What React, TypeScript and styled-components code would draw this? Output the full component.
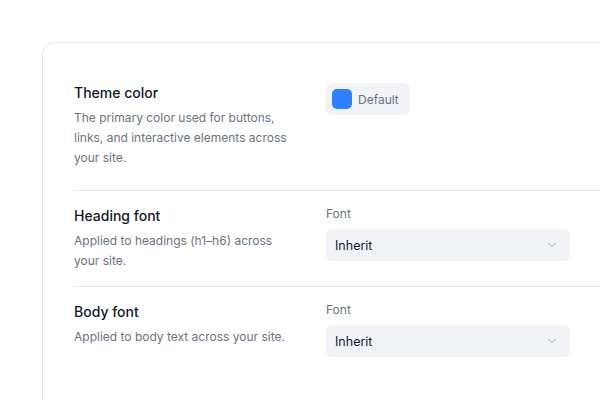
import React from 'react';
import styled, { createGlobalStyle } from 'styled-components';
import { ChevronDown } from 'lucide-react';

const GlobalStyle = createGlobalStyle`
  html, body {
    margin: 0;
    padding: 0;
    background: #ffffff;
    overflow: hidden;
  }
  body {
    font-family: Inter, "Noto Sans", sans-serif;
    -webkit-font-smoothing: antialiased;
  }
`;

type SettingRowProps = {
  title: string;
  description: string;
  first?: boolean;
  children: React.ReactNode;
};

function SettingRow({ title, description, first, children }: SettingRowProps) {
  return (
    <StyledRow $first={first}>
      <StyledInfo>
        <StyledTitle>{title}</StyledTitle>
        <StyledDescription>{description}</StyledDescription>
      </StyledInfo>
      <StyledControl>{children}</StyledControl>
    </StyledRow>
  );
}

function FontSelect({ value }: { value: string }) {
  return (
    <>
      <StyledLabel>Font</StyledLabel>
      <StyledSelect type="button">
        <span>{value}</span>
        <ChevronDown size={14} strokeWidth={1.5} color="#9ca3af" />
      </StyledSelect>
    </>
  );
}

export default function App() {
  return (
    <StyledPage>
      <GlobalStyle />
      <StyledCard>
        <SettingRow
          first
          title="Theme color"
          description="The primary color used for buttons, links, and interactive elements across your site."
        >
          <StyledColorButton type="button">
            <StyledSwatch $color="#2f80fa" />
            Default
          </StyledColorButton>
        </SettingRow>
        <SettingRow
          title="Heading font"
          description="Applied to headings (h1–h6) across your site."
        >
          <FontSelect value="Inherit" />
        </SettingRow>
        <SettingRow
          title="Body font"
          description="Applied to body text across your site."
        >
          <FontSelect value="Inherit" />
        </SettingRow>
      </StyledCard>
    </StyledPage>
  );
}

const StyledPage = styled.div`
  width: 600px;
  height: 400px;
  padding: 42px 0 0 42px;
  box-sizing: border-box;
  overflow: hidden;
`;

const StyledCard = styled.div`
  width: 640px;
  min-height: 420px;
  box-sizing: border-box;
  background: #ffffff;
  border: 1px solid #e5e7eb;
  border-radius: 12px;
  padding: 24px 31px;
  display: flex;
  flex-direction: column;
`;

const StyledRow = styled.div<{ $first?: boolean }>`
  display: grid;
  grid-template-columns: 220px 244px;
  column-gap: 32px;
  padding: ${({ $first }) => ($first ? '16px 0 22px' : '15px 0 15px')};
  border-top: ${({ $first }) => ($first ? 'none' : '1px solid #e5e7eb')};
`;

const StyledInfo = styled.div`
  display: flex;
  flex-direction: column;
  gap: 5px;
`;

const StyledTitle = styled.div`
  font-size: 14px;
  line-height: 20px;
  font-weight: 500;
  color: #111827;
`;

const StyledDescription = styled.div`
  font-size: 12px;
  line-height: 20px;
  color: #6b7280;
`;

const StyledControl = styled.div`
  display: flex;
  flex-direction: column;
  align-items: flex-start;
  gap: 7px;
`;

const StyledColorButton = styled.button`
  display: flex;
  align-items: center;
  gap: 6px;
  height: 32px;
  padding: 0 11px 0 6px;
  border: none;
  border-radius: 6px;
  background: #f2f3f6;
  font-family: inherit;
  font-size: 12px;
  color: #6b7280;
  cursor: pointer;
`;

const StyledSwatch = styled.span<{ $color: string }>`
  width: 20px;
  height: 20px;
  border-radius: 5px;
  background: ${({ $color }) => $color};
`;

const StyledLabel = styled.div`
  font-size: 12px;
  line-height: 16px;
  color: #6b7280;
`;

const StyledSelect = styled.button`
  width: 244px;
  height: 32px;
  display: flex;
  align-items: center;
  justify-content: space-between;
  padding: 0 11px 0 9px;
  border: none;
  border-radius: 6px;
  background: #f2f3f6;
  font-family: inherit;
  font-size: 12.5px;
  color: #111827;
  cursor: pointer;
`;
